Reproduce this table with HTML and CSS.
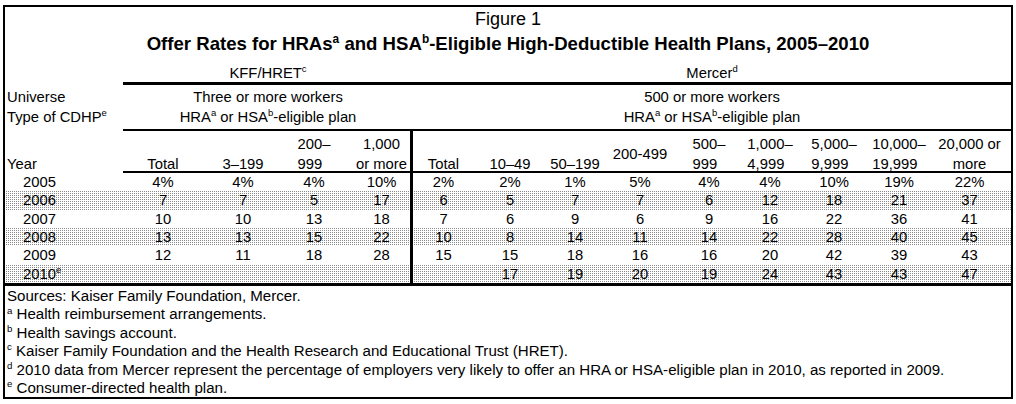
FILE: index.html
```html
<!DOCTYPE html>
<html>
<head>
<meta charset="utf-8">
<link rel="stylesheet" href="styles.css">
</head>
<body>
<div class="frame">
  <div class="fig">Figure 1</div>
  <div class="title">Offer Rates for HRAs<sup>a</sup> and HSA<sup>b</sup>-Eligible High-Deductible Health Plans, 2005–2010</div>

  <div class="grp grp-src">
    <div class="lbl"></div>
    <div class="k">KFF/HRET<sup>c</sup></div>
    <div class="m">Mercer<sup>d</sup></div>
  </div>
  <div class="grp grp-uni">
    <div class="lbl">Universe</div>
    <div class="k">Three or more workers</div>
    <div class="m">500 or more workers</div>
  </div>
  <div class="grp grp-type">
    <div class="lbl">Type of CDHP<sup>e</sup></div>
    <div class="k">HRA<sup>a</sup> or HSA<sup>b</sup>-eligible plan</div>
    <div class="m">HRA<sup>a</sup> or HSA<sup>b</sup>-eligible plan</div>
  </div>

  <div class="row head">
    <div class="yr">Year</div>
    <div class="l2">Total</div>
    <div class="l2">3–199</div>
    <div><span class="stack">200–<br>999</span></div>
    <div class="c5">1,000<br>or more</div>
    <div class="dv"></div>
    <div class="l2">Total</div>
    <div class="l2">10–49</div>
    <div class="l2">50–199</div>
    <div class="mid">200-499</div>
    <div><span class="stack">500–<br>999</span></div>
    <div><span class="stack">1,000–<br>4,999</span></div>
    <div><span class="stack">5,000–<br>9,999</span></div>
    <div><span class="stack">10,000–<br>19,999</span></div>
    <div>20,000 or<br>more</div>
  </div>

  <div class="row d">
    <div class="yr">2005</div><div>4%</div><div>4%</div><div>4%</div><div class="c5">10%</div><div class="dv"></div>
    <div>2%</div><div>2%</div><div>1%</div><div>5%</div><div>4%</div><div>4%</div><div>10%</div><div>19%</div><div>22%</div>
  </div>
  <div class="row d shade">
    <div class="yr">2006</div><div>7</div><div>7</div><div>5</div><div class="c5">17</div><div class="dv"></div>
    <div>6</div><div>5</div><div>7</div><div>7</div><div>6</div><div>12</div><div>18</div><div>21</div><div>37</div>
  </div>
  <div class="row d">
    <div class="yr">2007</div><div>10</div><div>10</div><div>13</div><div class="c5">18</div><div class="dv"></div>
    <div>7</div><div>6</div><div>9</div><div>6</div><div>9</div><div>16</div><div>22</div><div>36</div><div>41</div>
  </div>
  <div class="row d shade">
    <div class="yr">2008</div><div>13</div><div>13</div><div>15</div><div class="c5">22</div><div class="dv"></div>
    <div>10</div><div>8</div><div>14</div><div>11</div><div>14</div><div>22</div><div>28</div><div>40</div><div>45</div>
  </div>
  <div class="row d">
    <div class="yr">2009</div><div>12</div><div>11</div><div>18</div><div class="c5">28</div><div class="dv"></div>
    <div>15</div><div>15</div><div>18</div><div>16</div><div>16</div><div>20</div><div>42</div><div>39</div><div>43</div>
  </div>
  <div class="row d shade">
    <div class="yr">2010<sup>e</sup></div><div></div><div></div><div></div><div class="c5"></div><div class="dv"></div>
    <div></div><div>17</div><div>19</div><div>20</div><div>19</div><div>24</div><div>43</div><div>43</div><div>47</div>
  </div>

  <div class="notes">
    <div>Sources: Kaiser Family Foundation, Mercer.</div>
    <div><sup>a</sup> Health reimbursement arrangements.</div>
    <div><sup>b</sup> Health savings account.</div>
    <div><sup>c</sup> Kaiser Family Foundation and the Health Research and Educational Trust (HRET).</div>
    <div><sup>d</sup> 2010 data from Mercer represent the percentage of employers very likely to offer an HRA or HSA-eligible plan in 2010, as reported in 2009.</div>
    <div><sup>e</sup> Consumer-directed health plan.</div>
  </div>
</div>
</body>
</html>
```

FILE: styles.css
```css
* { box-sizing: border-box; }

body {
  margin: 0;
  background: #fff;
  color: #000;
  font-family: "Liberation Sans", Arial, Helvetica, sans-serif;
}

.frame {
  margin: 5px 0 0 3px;
  width: 1010px;
  border: 2px solid #000;
}

sup {
  font-size: 0.64em;
  line-height: 0;
  vertical-align: baseline;
  position: relative;
  top: -0.6em;
}

.fig {
  text-align: center;
  font-size: 18px;
  line-height: 20px;
  padding-top: 2px;
}

.title {
  text-align: center;
  font-size: 18.6px;
  font-weight: bold;
  line-height: 22px;
  margin-top: 4px;
}

.grp {
  display: grid;
  grid-template-columns: 118px 290px 598px;
  font-size: 14.8px;
}
.grp .lbl { padding-left: 2px; }
.grp .k, .grp .m { text-align: center; }

.grp-src { margin-top: 10px; line-height: 17px; }
.grp-src .k, .grp-src .m { border-bottom: 3px solid #000; }

.grp-uni { padding-top: 2px; line-height: 20px; }

.grp-type { line-height: 20px; }
.grp-type .k, .grp-type .m { border-bottom: 2px solid #000; padding-bottom: 2px; }

.row {
  display: grid;
  grid-template-columns: 118px 80px 80px 62px 65px 3px 61px 72px 58px 72px 66px 56px 72px 58px 83px;
  font-size: 14.8px;
}
.row > div { text-align: center; }
.row .yr { text-align: left; padding-left: 18px; }
.row .dv { background: #000; }
.row .c5 { padding-left: 8px; }

.head > div {
  height: 42px;
  border-bottom: 2px solid #000;
  line-height: 20px;
  padding-top: 3px;
}
.head > .yr { border-bottom: none; padding-left: 2px; padding-top: 23px; }
.head > .l2 { padding-top: 23px; }
.head > .mid { padding-top: 13px; }
.stack { display: inline-block; text-align: left; }

.d { height: 18.33px; line-height: 18.33px; }
.shade {
  background: conic-gradient(#8a8a8a 0 25%, #ffffff 0) 0 0 / 2px 2px;
}

.notes {
  border-top: 3px solid #000;
  font-size: 15.1px;
  line-height: 18.4px;
  padding: 1px 0 0 2px;
}
```
